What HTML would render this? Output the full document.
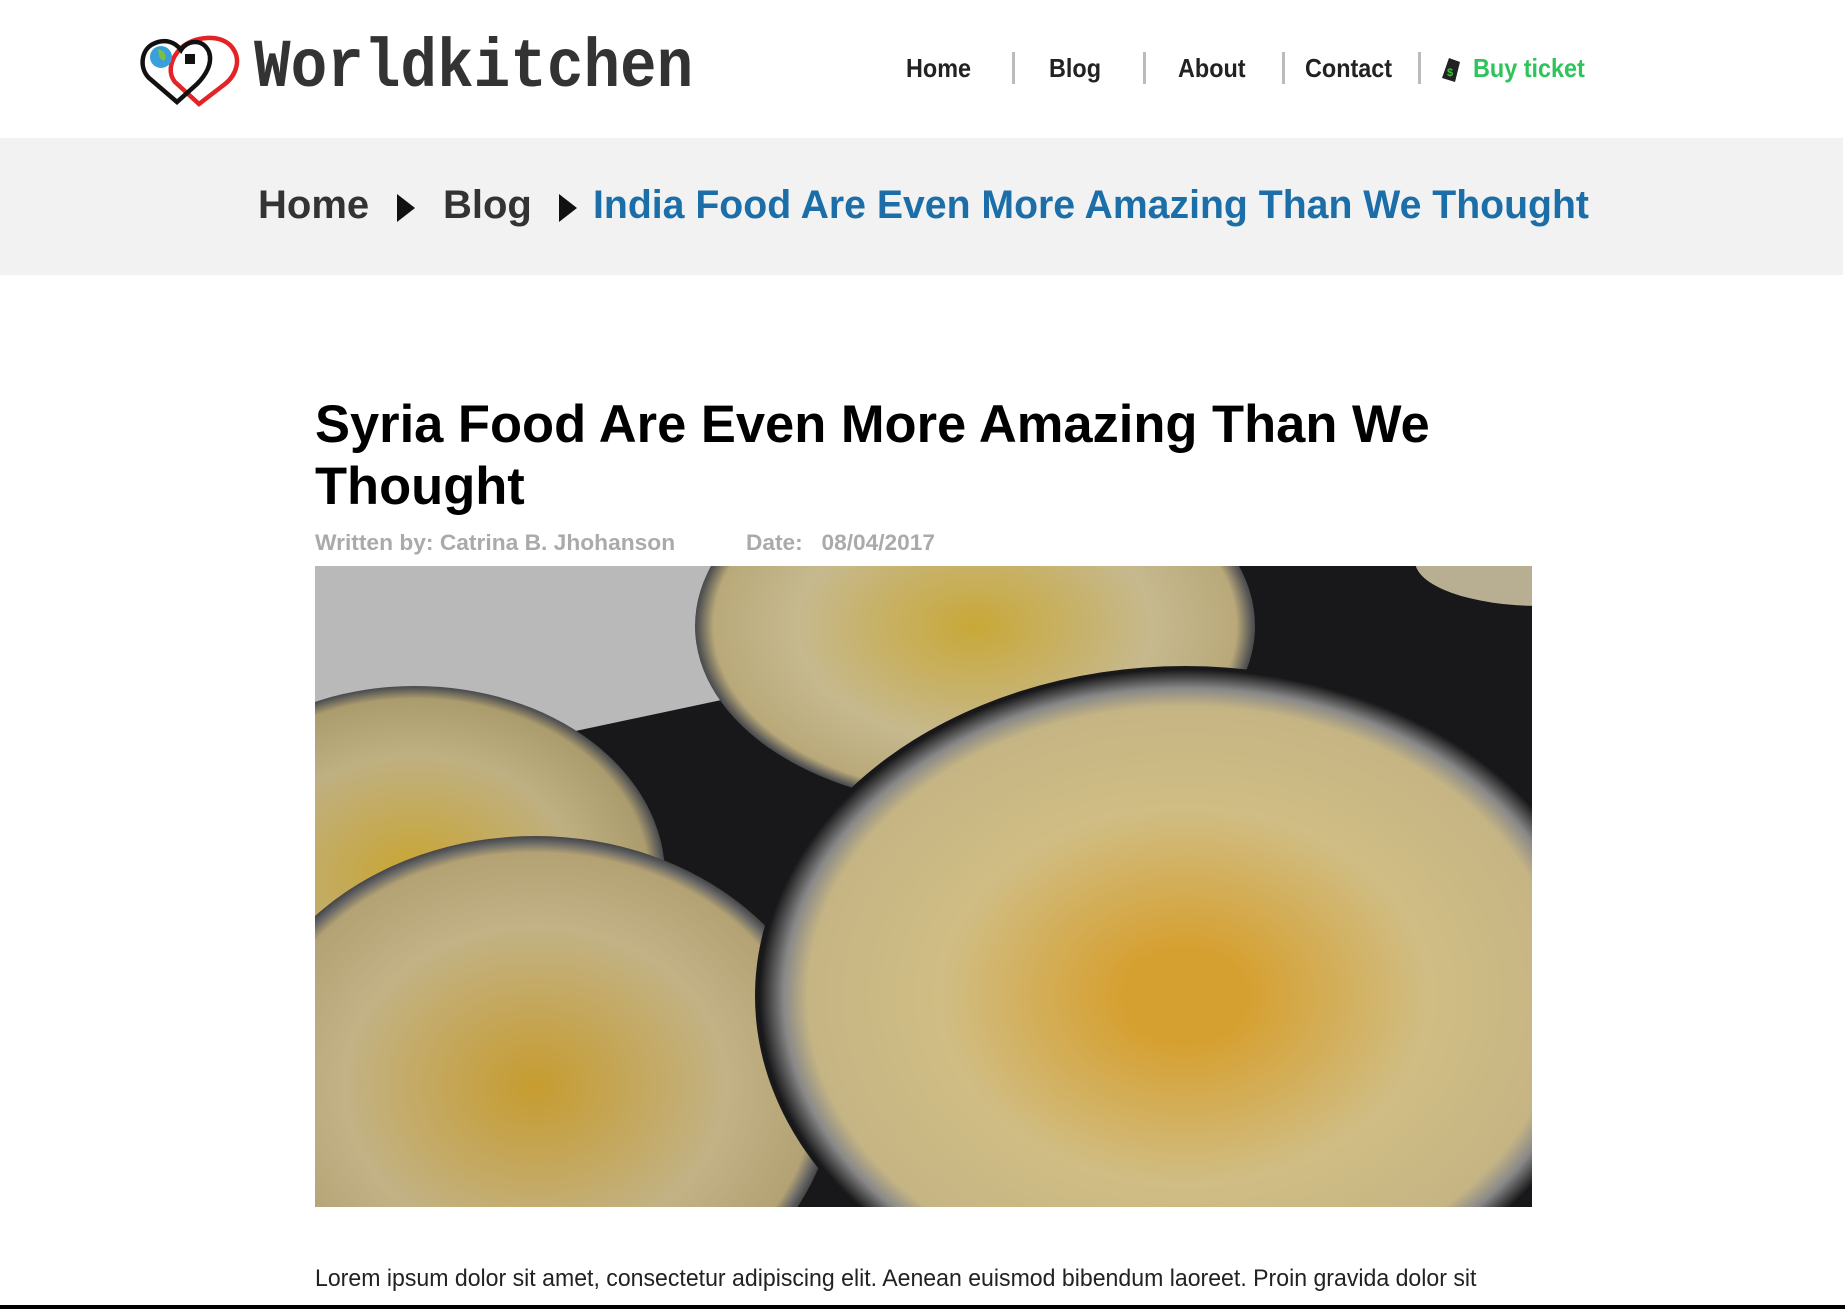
<!DOCTYPE html>
<html><head><meta charset="utf-8"><style>
*{margin:0;padding:0;box-sizing:border-box}
body{width:1845px;height:1309px;overflow:hidden;background:#fff;font-family:"Liberation Sans",sans-serif;position:relative}
.hdr{position:absolute;left:0;top:0;width:1845px;height:138px}
.logo{position:absolute;left:254px;top:30px;font-family:"Liberation Mono",monospace;font-weight:bold;font-size:61px;color:#333;transform:scaleY(1.12);transform-origin:top left}
.nav{position:absolute;top:53px;font-size:26px;font-weight:bold;color:#222;transform:scaleX(.9);transform-origin:left top}
.sep{position:absolute;top:52px;width:3px;height:32px;background:#bbb}
.bc{position:absolute;left:0;top:138px;width:1843px;height:137px;background:#f2f2f2}
.bc span{position:absolute;top:45px;font-size:40px;font-weight:bold;color:#333;white-space:nowrap;transform-origin:left top}
.tri{position:absolute;top:56px;width:0;height:0;border-left:18px solid #111;border-top:14px solid transparent;border-bottom:14px solid transparent}
h1{position:absolute;left:315px;top:394px;width:1250px;font-size:53px;line-height:62px;font-weight:bold;color:#000;transform:scaleX(.99);transform-origin:left top}
.meta{position:absolute;top:530px;font-size:22px;font-weight:bold;color:#aaa;transform-origin:left top;white-space:nowrap}
.img{position:absolute;left:315px;top:566px;width:1217px;height:641px;background:#18181a;overflow:hidden}
.img div{position:absolute;border-radius:50%}
p{position:absolute;left:315px;top:1265px;font-size:24px;color:#222;white-space:nowrap;transform:scaleX(.962);transform-origin:left top}
.bot{position:absolute;left:0;top:1305px;width:1845px;height:4px;background:#000}
</style></head><body>
<div class="hdr">
<svg style="position:absolute;left:139px;top:32px" width="105" height="75" viewBox="0 0 105 75">
<path d="M60 72 L36 50 C28 40 32 26 42 16 C56 4 80 2 92 14 C104 28 96 44 86 52 Z" fill="none" stroke="#e32326" stroke-width="4.5"/>
<path d="M38 70 L10 46 C0 36 2 18 14 12 C26 6 36 10 42 18 C48 8 64 6 70 20 C74 32 66 44 58 52 Z" fill="none" stroke="#111" stroke-width="4.5"/>
<circle cx="22" cy="25" r="11" fill="#3aa0dc"/><path d="M19 17 q9 2 7 11 q-6 2 -7 -11z" fill="#7bc043"/>
<rect x="46" y="22" width="10" height="10" fill="#111"/>
</svg>
<div class="logo">Worldkitchen</div>
<div class="nav" style="left:906px">Home</div><div class="sep" style="left:1012px"></div>
<div class="nav" style="left:1049px">Blog</div><div class="sep" style="left:1143px"></div>
<div class="nav" style="left:1178px">About</div><div class="sep" style="left:1282px"></div>
<div class="nav" style="left:1305px">Contact</div><div class="sep" style="left:1418px"></div>
<svg style="position:absolute;left:1440px;top:54px" width="24" height="30" viewBox="0 0 24 30"><path d="M9 4 L20 8 L15 28 L2 24Z" fill="#222"/><text x="7" y="22" font-size="11" fill="#3c3" font-weight="bold">$</text></svg>
<div class="nav" style="left:1473px;color:#2ec45a">Buy ticket</div>
</div>
<div class="bc">
<span style="left:258px">Home</span><div class="tri" style="left:397px"></div>
<span style="left:443px">Blog</span><div class="tri" style="left:559px"></div>
<span style="left:593px;color:#1b6ea8;transform:scaleX(.98)">India Food Are Even More Amazing Than We Thought</span>
</div>
<h1>Syria Food Are Even More Amazing Than We Thought</h1>
<div class="meta" style="left:315px;transform:scaleX(1.035)">Written by: Catrina B. Jhohanson</div>
<div class="meta" style="left:746px;transform:scaleX(1.03)">Date:&nbsp;&nbsp; 08/04/2017</div>
<div class="img">
<div style="left:-40px;top:-120px;width:460px;height:300px;background:#b9b9b9;border-radius:0;transform:skewY(-12deg)"></div>
<div style="left:380px;top:-120px;width:560px;height:360px;background:radial-gradient(#c9a838,#c6b98e 45%,#b9a97a 66%,#555 70%,#18181a 74%)"></div>
<div style="left:-150px;top:120px;width:500px;height:380px;background:radial-gradient(#c9a530,#bfb082 45%,#ab9c6e 66%,#555 70%,#18181a 74%)"></div>
<div style="left:-80px;top:270px;width:600px;height:500px;background:radial-gradient(#c79c30,#c2b285 45%,#b3a274 66%,#666 69%,#18181a 73%)"></div>
<div style="left:440px;top:100px;width:860px;height:660px;background:radial-gradient(#d6a030 10%,#d0bd84 40%,#c6b584 62%,#888 66%,#18181a 70%)"></div>
<div style="left:1100px;top:-50px;width:250px;height:90px;background:#b8ae92"></div>
</div>
<p>Lorem ipsum dolor sit amet, consectetur adipiscing elit. Aenean euismod bibendum laoreet. Proin gravida dolor sit</p>
<div class="bot"></div>
</body></html>
